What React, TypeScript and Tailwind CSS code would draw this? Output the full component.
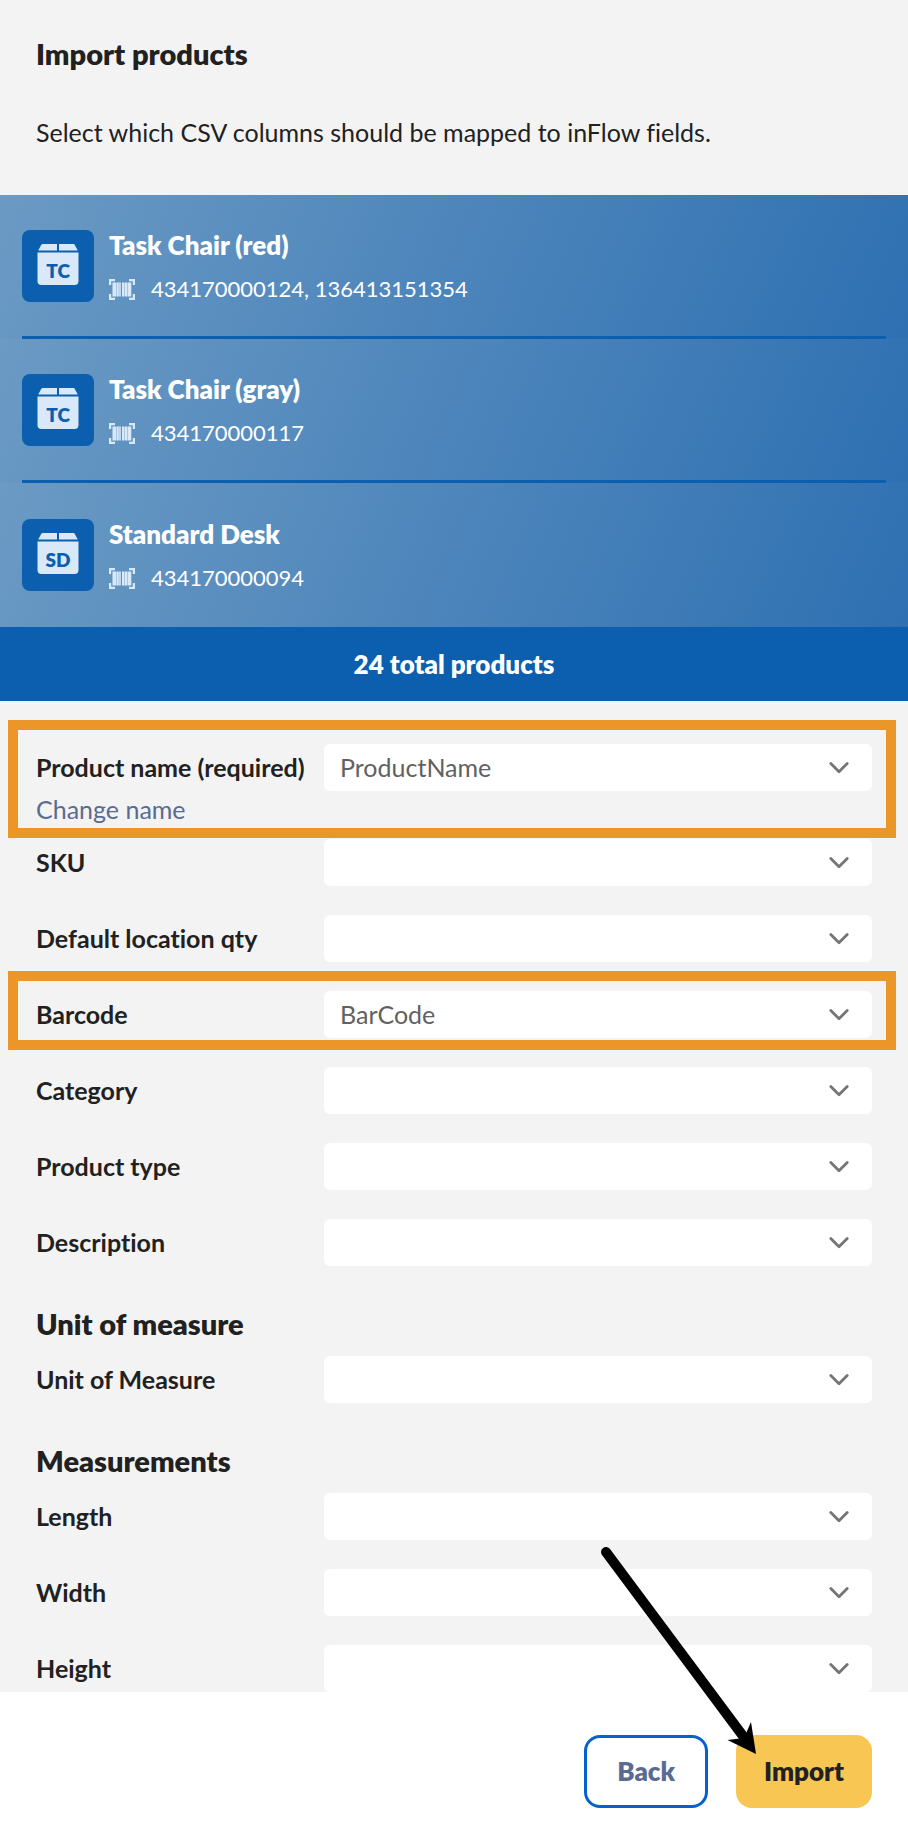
import React from "react";

interface Product {
	name: string;
	initials: string;
	barcodes: string;
}

interface Field {
	id: string;
	label: string;
	value?: string;
	link?: string;
	highlight?: string;
}

interface SectionProps {
	title?: string;
	fields: Field[];
}

const products: Product[] = [
	{
		name: "Task Chair (red)",
		initials: "TC",
		barcodes: "434170000124, 136413151354",
	},
	{ name: "Task Chair (gray)", initials: "TC", barcodes: "434170000117" },
	{ name: "Standard Desk", initials: "SD", barcodes: "434170000094" },
];

const generalFields: Field[] = [
	{
		id: "name",
		label: "Product name (required)",
		value: "ProductName",
		link: "Change name",
		highlight: "-top-6 -bottom-7",
	},
	{ id: "sku", label: "SKU" },
	{ id: "qty", label: "Default location qty" },
	{
		id: "barcode",
		label: "Barcode",
		value: "BarCode",
		highlight: "-top-5 -bottom-3",
	},
	{ id: "category", label: "Category" },
	{ id: "type", label: "Product type" },
	{ id: "description", label: "Description" },
];

const unitFields: Field[] = [{ id: "uom", label: "Unit of Measure" }];

const measurementFields: Field[] = [
	{ id: "length", label: "Length" },
	{ id: "width", label: "Width" },
	{ id: "height", label: "Height" },
];

const BoxIcon: React.FC<{ initials: string }> = ({ initials }) => (
	<div className="relative h-[72px] w-[72px] shrink-0 rounded-lg bg-[#0b5fae]">
		<svg viewBox="0 0 72 72" className="h-full w-full" fill="#dae9f9">
			<path d="M20.5 14H35v6.5H16.2l3-5.6q.5-.9 1.3-.9Z" />
			<path d="M37 14h14.5q.8 0 1.3.9l3 5.6H37Z" />
			<path d="M15.5 22.5h41V51a4 4 0 0 1-4 4h-33a4 4 0 0 1-4-4Z" />
		</svg>
		<span className="absolute inset-x-0 top-[30px] text-center text-[19px] leading-[22px] font-extrabold text-[#0b5fae]">
			{initials}
		</span>
	</div>
);

const BarcodeIcon: React.FC = () => (
	<svg viewBox="0 0 26 22" className="h-[22px] w-[26px]" fill="#dae9f9">
		<path d="M0 1h6v2.200H2.200V7H0ZM20 1h6v6h-2.200V3.200H20ZM0 16h2.200v3.800H6V22H0ZM23.800 16H26v6h-6v-2.200h3.800Z" />
		<path d="M3.500 4.500h3.700v14H3.500ZM7.600 4.500h2.200v14H7.600ZM10.200 4.500h1.600v14h-1.600ZM13 4.500h2.600v14H13ZM16 4.500h2.200v14H16ZM18.600 4.500h3.700v14h-3.700Z" />
	</svg>
);

const ProductRow: React.FC<Product> = ({ name, initials, barcodes }) => (
	<li className="group bg-linear-[114deg] from-[#6b9ac4] to-[#2e70b2] px-[22px]">
		<div className="flex h-36 items-center gap-[15px] border-b-[3px] border-[#0b5fae] group-last:border-b-0">
			<BoxIcon initials={initials} />
			<div className="text-white">
				<div className="text-[26px] leading-8 font-extrabold">{name}</div>
				<div className="mt-[14px] flex items-center gap-4 text-[22px] leading-7">
					<BarcodeIcon />
					{barcodes}
				</div>
			</div>
		</div>
	</li>
);

const FieldRow: React.FC<Field> = ({ id, label, value, link, highlight }) => (
	<div className="relative">
		<div className="flex items-center">
			<label
				htmlFor={id}
				className="w-72 shrink-0 text-[25px] leading-[47px] font-bold whitespace-nowrap"
			>
				{label}
			</label>
			<div className="relative grow">
				<select
					id={id}
					defaultValue={value}
					className="block h-[47px] w-full appearance-none rounded-md bg-white px-4 text-[25px] text-[#616161]"
				>
					<option>{value}</option>
				</select>
				<svg
					viewBox="0 0 20 12"
					className="pointer-events-none absolute top-[18px] right-[23px] h-3 w-5"
					fill="none"
					stroke="#757575"
					strokeWidth="2.8"
					strokeLinecap="round"
					strokeLinejoin="round"
				>
					<path d="M1.800 1.500 10 9.700l8.200-8.200" />
				</svg>
			</div>
		</div>
		{link && (
			<a
				href="#"
				className="-mb-[17px] block w-fit text-[25px] leading-9 text-[#5a6b93]"
			>
				{link}
			</a>
		)}
		{highlight && (
			<div
				className={`pointer-events-none absolute -right-6 -left-7 border-10 border-[#eb9629] ${highlight}`}
			/>
		)}
	</div>
);

const Section: React.FC<SectionProps> = ({ title, fields }) => (
	<section>
		{title && (
			<h2 className="mb-[14px] text-[29px] leading-9 font-extrabold">
				{title}
			</h2>
		)}
		<div className="flex flex-col gap-[29px]">
			{fields.map((field) => (
				<FieldRow key={field.id} {...field} />
			))}
		</div>
	</section>
);

const App: React.FC = () => (
	<div className="min-h-screen bg-white font-['Lato',sans-serif] text-[#212121] [font-variant-ligatures:no-common-ligatures]">
		<div className="bg-[#f3f3f3]">
			<header className="px-9 pt-9 pb-[45px]">
				<h1 className="text-[29px] leading-9 font-extrabold">
					Import products
				</h1>
				<p className="mt-[42px] text-[25px] leading-9">
					Select which CSV columns should be mapped to inFlow fields.
				</p>
			</header>
			<ul>
				{products.map((product) => (
					<ProductRow key={product.name} {...product} />
				))}
			</ul>
			<div className="bg-[#0b5fae] text-center text-[26px] leading-[74px] font-extrabold text-white">
				24 total products
			</div>
			<form className="flex flex-col gap-10 px-9 pt-[43px]">
				<Section fields={generalFields} />
				<Section title="Unit of measure" fields={unitFields} />
				<Section title="Measurements" fields={measurementFields} />
			</form>
		</div>
		<footer className="flex justify-end gap-7 px-9 pt-[43px] pb-9 text-[26px] font-extrabold">
			<button
				type="button"
				className="h-[73px] rounded-2xl border-[3px] border-[#0560d1] px-[30px] text-[#5a6b93]"
			>
				Back
			</button>
			<button
				type="button"
				className="relative h-[73px] rounded-2xl bg-[#f7c653] px-7"
			>
				Import
				<svg
					viewBox="0 0 160 210"
					className="pointer-events-none absolute right-[116px] bottom-[54px] h-[210px] w-40"
				>
					<path
						d="M10 8 147 192"
						stroke="#000"
						strokeWidth="10"
						strokeLinecap="round"
					/>
					<path d="M160 210 131.500 196 148 194 155 178Z" />
				</svg>
			</button>
		</footer>
	</div>
);

export default App;
